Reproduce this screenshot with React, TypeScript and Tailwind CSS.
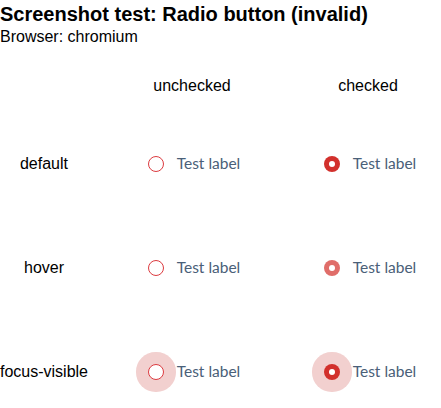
import React from "react";

type State = "default" | "hover" | "focus";

function Radio({ checked, state }: { checked: boolean; state: State }) {
  const halo = state === "focus" ? "shadow-[0_0_0_12px_#f2d0cf]" : "";
  if (checked) {
    const color = state === "hover" ? "bg-[#e06d69]" : "bg-[#d2302c]";
    return (
      <span className={`relative flex h-4 w-4 items-center justify-center rounded-full ${color} ${halo}`}>
        <span className="h-[6px] w-[6px] rounded-full bg-white" />
      </span>
    );
  }
  return <span className={`block h-4 w-4 rounded-full border border-[#dc3b40] bg-white ${halo}`} />;
}

function Cell({ checked, state }: { checked: boolean; state: State }) {
  return (
    <div className="flex items-center gap-[13px] pl-[4px]">
      <Radio checked={checked} state={state} />
      <span className="text-[15.5px] leading-none text-[#4a6078]" style={{ fontFamily: "Lato, 'Noto Sans', sans-serif" }}>
        Test label
      </span>
    </div>
  );
}

export default function App() {
  const rows: { label: string; state: State; h: string }[] = [
    { label: "default", state: "default", h: "h-[105px]" },
    { label: "hover", state: "hover", h: "h-[104px]" },
    { label: "focus-visible", state: "focus", h: "h-[104px]" },
  ];
  return (
    <div className="h-[408px] w-[441px] overflow-hidden bg-white text-black" style={{ fontFamily: "'Liberation Sans', Arial, sans-serif" }}>
      <h1 className="text-[20px] font-bold leading-[28px]">Screenshot test: Radio button (invalid)</h1>
      <div className="text-[16px] leading-[18px]">Browser: chromium</div>
      <div className="mt-[15px] grid grid-cols-[88px_208px_144px] text-[16px]">
        <div className="h-[50px]" />
        <div className="flex h-[50px] items-center justify-center">unchecked</div>
        <div className="flex h-[50px] items-center justify-center">checked</div>
        {rows.map((r) => (
          <React.Fragment key={r.label}>
            <div className={`flex ${r.h} items-center justify-center whitespace-nowrap`}>{r.label}</div>
            <div className={`flex ${r.h} items-center justify-center`}>
              <Cell checked={false} state={r.state} />
            </div>
            <div className={`flex ${r.h} items-center justify-center`}>
              <Cell checked={true} state={r.state} />
            </div>
          </React.Fragment>
        ))}
      </div>
    </div>
  );
}
